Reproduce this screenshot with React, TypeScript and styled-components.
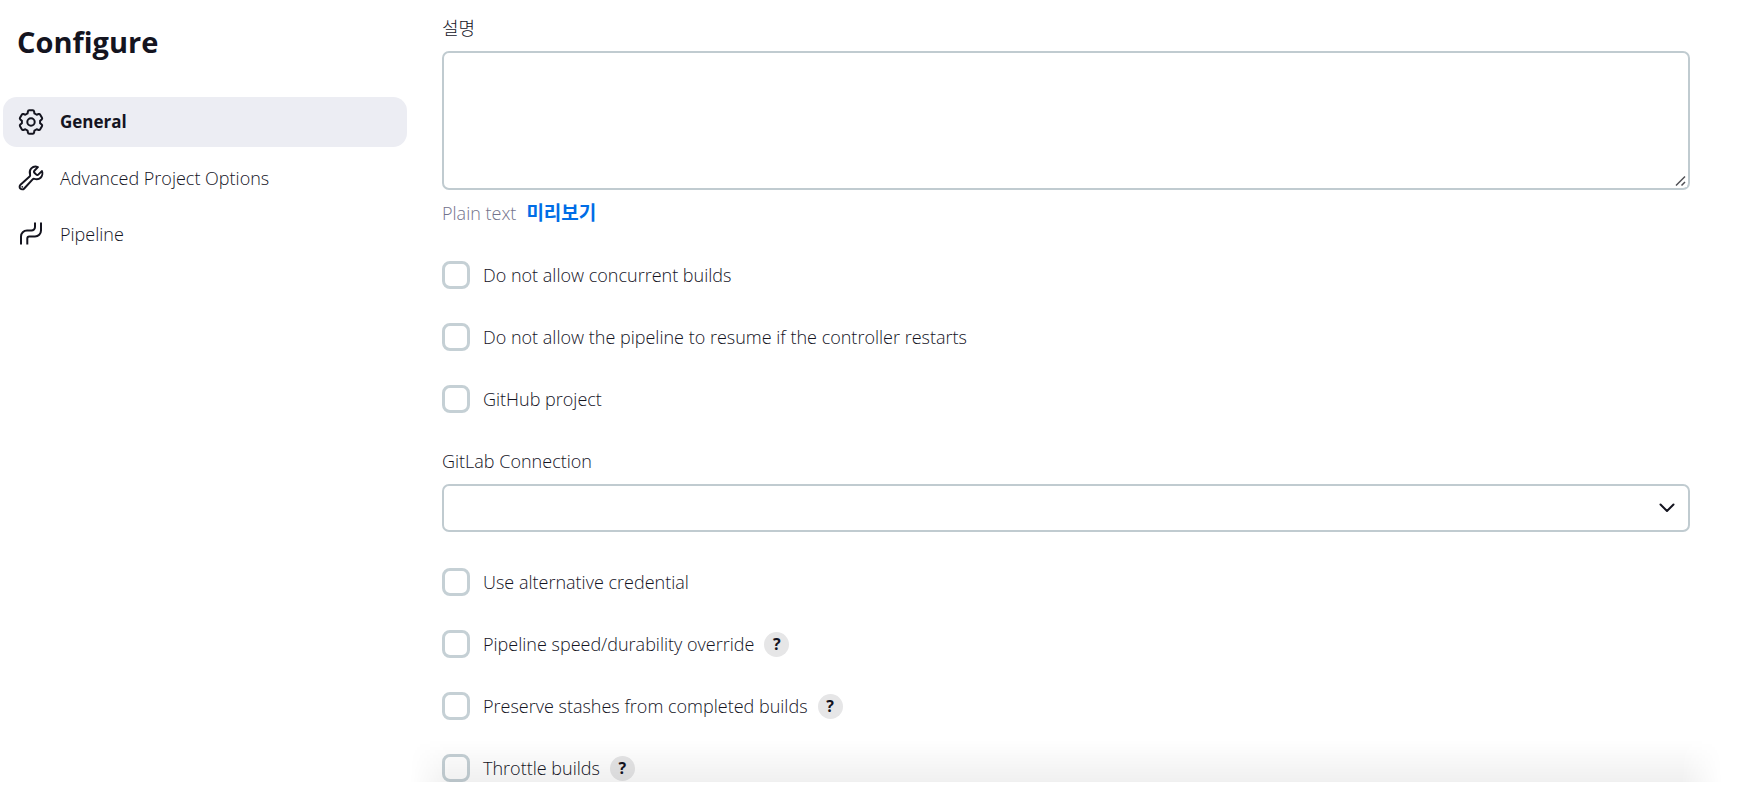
import React from "react";
import styled, { createGlobalStyle } from "styled-components";
import { IoBuildOutline } from "react-icons/io5";

const Global = createGlobalStyle`
  *, *::before, *::after { box-sizing: border-box; }
  body {
    margin: 0;
    background: #fff;
    color: #14141f;
    font-family: "Open Sans", "Noto Sans CJK KR", sans-serif;
    font-size: 18px;
    font-weight: 300;
    line-height: 24px;
  }
`;

const Page = styled.div`
  display: flex;
  align-items: flex-start;
`;

const Sidebar = styled.aside`
  flex: 0 0 410px;
  padding: 22px 3px 0;
`;

const Title = styled.h1`
  margin: 0 0 35px;
  padding-left: 14px;
  font-size: 29px;
  font-weight: 700;
  line-height: 40px;
`;

const Nav = styled.nav`
  display: flex;
  flex-direction: column;
  gap: 6px;
`;

const NavLink = styled.a<{ $active?: boolean }>`
  display: flex;
  align-items: center;
  gap: 15px;
  height: 50px;
  padding: 0 14px;
  border-radius: 14px;
  background: ${(p) => (p.$active ? "#ecedf3" : "transparent")};
  color: inherit;
  font-size: ${(p) => (p.$active ? 17 : 18)}px;
  font-weight: ${(p) => (p.$active ? 700 : 300)};
  text-decoration: none;

  svg {
    width: 28px;
    height: 28px;
  }
`;

const WrenchIcon = styled(IoBuildOutline)`
  path {
    stroke-width: 36px;
  }
`;

const Main = styled.main`
  flex: 1;
  min-width: 0;
  padding: 16px 52px 0 32px;
`;

const Field = styled.div`
  display: flex;
  flex-direction: column;
  gap: 11px;
`;

const FieldLabel = styled.label`
  align-self: flex-start;
`;

const Overlaid = styled.div`
  display: grid;

  > * {
    grid-area: 1 / 1;
  }

  svg {
    justify-self: end;
    pointer-events: none;
  }
`;

const TextAreaBox = styled(Overlaid)`
  align-items: end;

  svg {
    margin: 0 3px 3px 0;
  }
`;

const SelectBox = styled(Overlaid)`
  align-items: center;

  svg {
    margin-right: 15px;
  }
`;

const TextArea = styled.textarea`
  display: block;
  width: 100%;
  height: 139px;
  padding: 10px;
  border: 2px solid #c0cbd0;
  border-radius: 7px;
  background: #fff;
  font: inherit;
  resize: vertical;

  &::-webkit-resizer {
    background: transparent;
  }
`;

const Select = styled.select`
  appearance: none;
  width: 100%;
  height: 48px;
  padding: 0 40px 0 12px;
  border: 2px solid #c0cbd0;
  border-radius: 7px;
  background: #fff;
  font: inherit;
`;

const Hint = styled.div`
  display: flex;
  gap: 10px;
  color: #73738c;
`;

const PreviewLink = styled.a`
  color: #006de6;
  font-size: 19px;
  font-weight: 700;
  text-decoration: none;
`;

const Options = styled.div`
  display: flex;
  flex-direction: column;
  gap: 34px;
  margin: 36px 0;

  &:last-of-type {
    margin-bottom: 0;
  }
`;

const OptionRow = styled.div`
  display: flex;
  align-items: center;
  gap: 10px;
  height: 28px;
`;

const OptionLabel = styled.label`
  display: flex;
  align-items: center;
  gap: 13px;
`;

const Checkbox = styled.input`
  appearance: none;
  width: 28px;
  height: 28px;
  margin: 0;
  border: 3px solid #c5d0d5;
  border-radius: 8px;
  background: #fff;

  &:checked {
    border-color: #006de6;
    background: #006de6;
  }
`;

const HelpButton = styled.button`
  width: 25px;
  height: 25px;
  padding: 0;
  border: 0;
  border-radius: 50%;
  background: #e6e6e7;
  color: #14141f;
  font: 700 16px/25px "Open Sans", sans-serif;
`;

const Footer = styled.footer`
  position: relative;
  height: 6px;
  margin: 0 -32px;
  background: #fff;

  &::before {
    content: "";
    position: absolute;
    right: 0;
    bottom: 100%;
    left: 0;
    height: 42px;
    background: linear-gradient(to bottom, rgba(0, 0, 0, 0), rgba(0, 0, 0, 0.06));
    mask-image: linear-gradient(to right, transparent, #000 40px, #000 calc(100% - 40px), transparent);
    pointer-events: none;
  }
`;

const GearIcon = () => (
  <svg viewBox="0 0 28 28" fill="none" stroke="currentColor" strokeWidth="2" strokeLinejoin="round" aria-hidden="true">
    <circle cx="14" cy="14" r="3.700" />
    <path d="M10.900 3.500Q11.100 2.360 12.200 2.360H15.800Q16.900 2.360 17.100 3.500L17.450 5.470L19.660 6.750L21.600 6.050Q22.630 5.670 23.200 6.650L24.980 9.730Q25.530 10.690 24.700 11.400L23.110 12.720V15.280L24.700 16.600Q25.530 17.310 24.980 18.270L23.200 21.350Q22.630 22.330 21.600 21.950L19.660 21.250L17.450 22.530L17.100 24.500Q16.900 25.640 15.800 25.640H12.200Q11.100 25.640 10.900 24.500L10.550 22.530L8.340 21.250L6.400 21.950Q5.370 22.330 4.800 21.350L3.020 18.270Q2.470 17.310 3.300 16.600L4.890 15.280V12.720L3.300 11.400Q2.470 10.690 3.020 9.730L4.800 6.650Q5.370 5.670 6.400 6.050L8.340 6.750L10.550 5.470Z" />
  </svg>
);

const PipelineIcon = () => (
  <svg viewBox="0 0 28 28" fill="none" stroke="currentColor" strokeWidth="2" aria-hidden="true">
    <path d="M4 24.500V16.500a6 6 0 0 1 6-6h4.500a3.500 3.500 0 0 0 3.500-3.500V2.500" />
    <path d="M10.300 24.500V18.500a2 2 0 0 1 2-2H18a6 6 0 0 0 6-6V2.500" />
  </svg>
);

const Chevron = () => (
  <svg width="16" height="10" viewBox="0 0 16 10" fill="none" stroke="#14141f" strokeWidth="2" strokeLinecap="round" strokeLinejoin="round" aria-hidden="true">
    <path d="M1.500 1.500 8 8l6.500-6.500" />
  </svg>
);

const ResizeGrip = () => (
  <svg width="12" height="12" viewBox="0 0 12 12" fill="none" aria-hidden="true">
    <path d="M0 0h12v12H0z" fill="#fff" />
    <path d="M1 10.500 10 1.500M6.500 10.500l3.500-3.500" stroke="#505055" strokeWidth="1.500" />
  </svg>
);

const Option = ({ id, label, help }: { id: string; label: string; help?: boolean }) => (
  <OptionRow>
    <OptionLabel htmlFor={id}>
      <Checkbox type="checkbox" id={id} />
      {label}
    </OptionLabel>
    {help && <HelpButton type="button" aria-label={`Help for ${label}`}>?</HelpButton>}
  </OptionRow>
);

export default function App() {
  return (
    <Page>
      <Global />
      <Sidebar>
        <Title>Configure</Title>
        <Nav>
          <NavLink href="#general" $active>
            <GearIcon />
            General
          </NavLink>
          <NavLink href="#advanced">
            <WrenchIcon />
            Advanced Project Options
          </NavLink>
          <NavLink href="#pipeline">
            <PipelineIcon />
            Pipeline
          </NavLink>
        </Nav>
      </Sidebar>
      <Main>
        <Field>
          <FieldLabel htmlFor="description">설명</FieldLabel>
          <TextAreaBox>
            <TextArea id="description" />
            <ResizeGrip />
          </TextAreaBox>
          <Hint>
            <span>Plain text</span>
            <PreviewLink href="#preview">미리보기</PreviewLink>
          </Hint>
        </Field>
        <Options>
          <Option id="concurrent" label="Do not allow concurrent builds" />
          <Option id="resume" label="Do not allow the pipeline to resume if the controller restarts" />
          <Option id="github" label="GitHub project" />
        </Options>
        <Field>
          <FieldLabel htmlFor="gitlab">GitLab Connection</FieldLabel>
          <SelectBox>
            <Select id="gitlab" />
            <Chevron />
          </SelectBox>
        </Field>
        <Options>
          <Option id="credential" label="Use alternative credential" />
          <Option id="durability" label="Pipeline speed/durability override" help />
          <Option id="stashes" label="Preserve stashes from completed builds" help />
          <Option id="throttle" label="Throttle builds" help />
        </Options>
        <Footer />
      </Main>
    </Page>
  );
}
